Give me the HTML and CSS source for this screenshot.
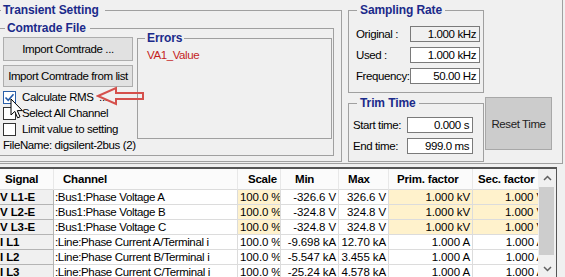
FILE: index.html
```html
<!DOCTYPE html>
<html lang="en">
<head>
  <meta charset="UTF-8">
  <title>Transient Setting</title>
  <link rel="stylesheet" href="styles.css">
</head>
<body>
<div class="window">

  <div class="top">
    <fieldset class="grp transient">
      <legend>Transient Setting</legend>
      <fieldset class="grp comtrade">
        <legend>Comtrade File</legend>
        <div class="comtrade-body">
          <div class="file-col">
            <button class="btn import1">Import Comtrade ...</button>
            <button class="btn import2">Import Comtrade from list</button>
            <div class="chk first"><span class="box on"><svg width="11" height="11" viewBox="0 0 11 11"><path d="M1.5 5.5 L4.2 8.3 L9.5 2.2" fill="none" stroke="#2058a8" stroke-width="1.6"/></svg></span>Calculate RMS &nbsp;...</div>
            <div class="chk"><span class="box"></span>Select All Channel</div>
            <div class="chk"><span class="box"></span>Limit value to setting</div>
            <div class="filename">FileName: digsilent-2bus (2)</div>
          </div>
          <fieldset class="grp errors">
            <legend>Errors</legend>
            <div class="err">VA1_Value</div>
          </fieldset>
        </div>
      </fieldset>
    </fieldset>

    <div class="side">
      <fieldset class="grp sampling">
        <legend>Sampling Rate</legend>
        <div class="field first"><span class="lbl">Original :</span><span class="tb ro">1.000 kHz</span></div>
        <div class="field"><span class="lbl">Used :</span><span class="tb">1.000 kHz</span></div>
        <div class="field"><span class="lbl">Frequency:</span><span class="tb">50.00 Hz</span></div>
      </fieldset>
      <div class="trim-row">
        <fieldset class="grp trim">
          <legend>Trim Time</legend>
          <div class="field first"><span class="lbl">Start time:</span><span class="tb">0.000 s</span></div>
          <div class="field"><span class="lbl">End time:</span><span class="tb">999.0 ms</span></div>
        </fieldset>
        <button class="btn reset">Reset Time</button>
      </div>
    </div>

    <svg class="red-arrow" width="50" height="22" viewBox="0 0 50 22">
      <polygon points="2,10 20,2 20,7 47,7 47,13 20,13 20,18" fill="none" stroke="#d5504c" stroke-width="2" stroke-linejoin="miter"/>
    </svg>
    <svg class="cursor" width="14" height="22" viewBox="0 0 14 22">
      <path d="M1 1 L1 17 L4.8 13.4 L7.6 19.8 L10 18.8 L7.3 12.6 L12.4 12.6 Z" fill="#fff" stroke="#000" stroke-width="1"/>
    </svg>
  </div>

  <div class="grid">
    <div class="cells">
      <div class="hd sig-h">Signal</div>
      <div class="hd ch-h">Channel</div>
      <div class="hd sc-h">Scale</div>
      <div class="hd mn-h">Min</div>
      <div class="hd mx-h">Max</div>
      <div class="hd pf-h">Prim. factor</div>
      <div class="hd sf-h">Sec. factor</div>

      <div class="c sig">V L1-E</div>
      <div class="c ch">:Bus1:Phase Voltage A</div>
      <div class="c num yl">100.0 %</div>
      <div class="c num">-326.6 V</div>
      <div class="c num">326.6 V</div>
      <div class="c num yl">1.000 kV</div>
      <div class="c num yl">1.000 V</div>

      <div class="c sig">V L2-E</div>
      <div class="c ch">:Bus1:Phase Voltage B</div>
      <div class="c num yl">100.0 %</div>
      <div class="c num">-324.8 V</div>
      <div class="c num">324.8 V</div>
      <div class="c num yl">1.000 kV</div>
      <div class="c num yl">1.000 V</div>

      <div class="c sig">V L3-E</div>
      <div class="c ch">:Bus1:Phase Voltage C</div>
      <div class="c num yl">100.0 %</div>
      <div class="c num">-324.8 V</div>
      <div class="c num">324.8 V</div>
      <div class="c num yl">1.000 kV</div>
      <div class="c num yl">1.000 V</div>

      <div class="c sig">I L1</div>
      <div class="c ch">:Line:Phase Current A/Terminal i</div>
      <div class="c num">100.0 %</div>
      <div class="c num">-9.698 kA</div>
      <div class="c num">12.70 kA</div>
      <div class="c num">1.000 A</div>
      <div class="c num">1.000 A</div>

      <div class="c sig">I L2</div>
      <div class="c ch">:Line:Phase Current B/Terminal i</div>
      <div class="c num">100.0 %</div>
      <div class="c num">-5.547 kA</div>
      <div class="c num">3.455 kA</div>
      <div class="c num">1.000 A</div>
      <div class="c num">1.000 A</div>

      <div class="c sig">I L3</div>
      <div class="c ch">:Line:Phase Current C/Terminal i</div>
      <div class="c num">100.0 %</div>
      <div class="c num">-25.24 kA</div>
      <div class="c num">4.578 kA</div>
      <div class="c num">1.000 A</div>
      <div class="c num">1.000 A</div>
    </div>
    <div class="vscroll">
      <div class="sb-btn"><svg width="9" height="6" viewBox="0 0 9 6"><path d="M1 5 L4.5 1.5 L8 5" fill="none" stroke="#606060" stroke-width="1.5"/></svg></div>
      <div class="thumb"></div>
      <div class="sb-btn down"><svg width="9" height="6" viewBox="0 0 9 6"><path d="M1 1 L4.5 4.5 L8 1" fill="none" stroke="#606060" stroke-width="1.5"/></svg></div>
    </div>
  </div>

</div>
</body>
</html>
```

FILE: styles.css
```css
* { box-sizing: border-box; }
body { margin: 0; background: #f0f0f0; font-family: "Liberation Sans", Arial, sans-serif; font-size: 11.5px; color: #000; overflow: hidden; }
.window { width: 565px; height: 277px; overflow: hidden; }

/* top panel */
.top { position: relative; display: flex; align-items: flex-start; width: 563px; height: 164px; padding-top: 3px; letter-spacing: -0.4px; border-right: 1px solid #a0a0a0; border-bottom: 1px solid #a0a0a0; }
.grp { margin: 0; padding: 0; min-width: 0; border: 1px solid #a0a0a0; }
.grp legend { padding: 0 2px; font-weight: bold; font-size: 12px; line-height: 14px; letter-spacing: -0.1px; color: #1b2a8a; }

.transient { margin-left: -2px; width: 344px; height: 159px; }
.transient > legend { margin-left: 2px; padding-right: 6px; }
.comtrade { margin: 4px 0 0 -2px; width: 337px; height: 135px; }
.comtrade > legend { margin-left: 7px; padding-right: 4px; }
.comtrade-body { display: flex; align-items: flex-start; padding-left: 5px; }

.file-col { width: 130px; margin-top: 2px; }
.btn { display: block; padding: 0; font: inherit; letter-spacing: -0.4px; white-space: nowrap; color: #000; background: #e1e1e1; border: 1px solid #adadad; }
.import1 { width: 130px; height: 24px; }
.import2 { width: 130px; height: 22px; margin-top: 4px; }
.chk { display: flex; align-items: center; height: 16px; white-space: nowrap; }
.chk.first { margin-top: 2px; }
.box { display: flex; align-items: center; justify-content: center; width: 13px; height: 13px; margin-right: 6px; background: #fff; border: 1px solid #333; }
.box.on { border-color: #2a5fa8; }
.filename { margin-top: 1px; line-height: 14px; white-space: nowrap; }

.errors { margin: -4px 0 0 4px; width: 195px; height: 108px; }
.errors > legend { margin-left: 7px; }
.err { padding: 3px 0 0 9px; line-height: 14px; color: #c41e1e; }

.side { flex: 1; margin-left: 6px; }
.sampling { width: 136px; height: 90px; }
.sampling legend, .trim legend { margin-left: 8px; padding: 0 3px; }
.sampling .field { padding-left: 7px; }
.sampling .field.first { margin-top: 9px; }
.sampling .tb { width: 70px; }
.field { display: flex; align-items: center; height: 16px; margin-top: 5px; white-space: nowrap; }
.lbl { width: 54px; }
.tb { height: 16px; padding-right: 3px; line-height: 14px; text-align: right; background: #fff; border: 1px solid #7a7a7a; }
.tb.ro { background: #f0f0f0; }

.trim-row { display: flex; align-items: flex-start; margin-top: 3px; }
.trim { width: 136px; height: 66px; }
.trim .field { padding-left: 4px; }
.trim .field.first { margin-top: 7px; }
.trim .tb { width: 66px; }
.reset { width: 67px; height: 53px; margin: 1px 0 0 1px; background: #cccccc; border-color: #a8a8a8; color: #222; }

.red-arrow { position: absolute; left: 96px; top: 86px; }
.cursor { position: absolute; left: 10px; top: 98px; }

/* channel grid */
.grid { display: flex; width: 557px; height: 110px; margin-top: 3px; border-top: 2px solid #555; border-right: 1px solid #555; }
.cells { flex: 1; overflow: hidden; display: grid; grid-template-columns: 57px 184px 43px 58px 50px 84px 74px; grid-template-rows: 21px; grid-auto-rows: 15px; margin-left: -3px; }
.hd, .c { white-space: nowrap; overflow: hidden; border-right: 1px solid #dcdcdc; border-bottom: 1px solid #dcdcdc; }
.hd { line-height: 20px; font-weight: bold; letter-spacing: -0.2px; background: #fbfbfb; border-right-color: #e8e8e8; }
.c { line-height: 14px; padding: 0 2px; letter-spacing: -0.1px; background: #fff; }
.sig { padding-left: 3px; font-weight: bold; background: #f0f0f0; border-color: #b4b4b4; }
.ch { padding-left: 1px; letter-spacing: -0.35px; }
.num { text-align: right; }
.yl { background: #fff2cc; }
.sig-h { padding-left: 8px; }
.ch-h { padding-left: 9px; }
.sc-h { text-align: right; padding-right: 3px; }
.mn-h { padding-left: 14px; }
.mx-h { padding-left: 9px; }
.pf-h { padding-left: 8px; }
.sf-h { padding-left: 5px; }

.vscroll { display: flex; flex-direction: column; width: 18px; background: #f0f0f0; }
.sb-btn { display: flex; align-items: center; justify-content: center; height: 17px; }
.sb-btn.down { margin-top: auto; }
.thumb { height: 68px; margin: 1px 2px 0 1px; background: #cdcdcd; }
```
